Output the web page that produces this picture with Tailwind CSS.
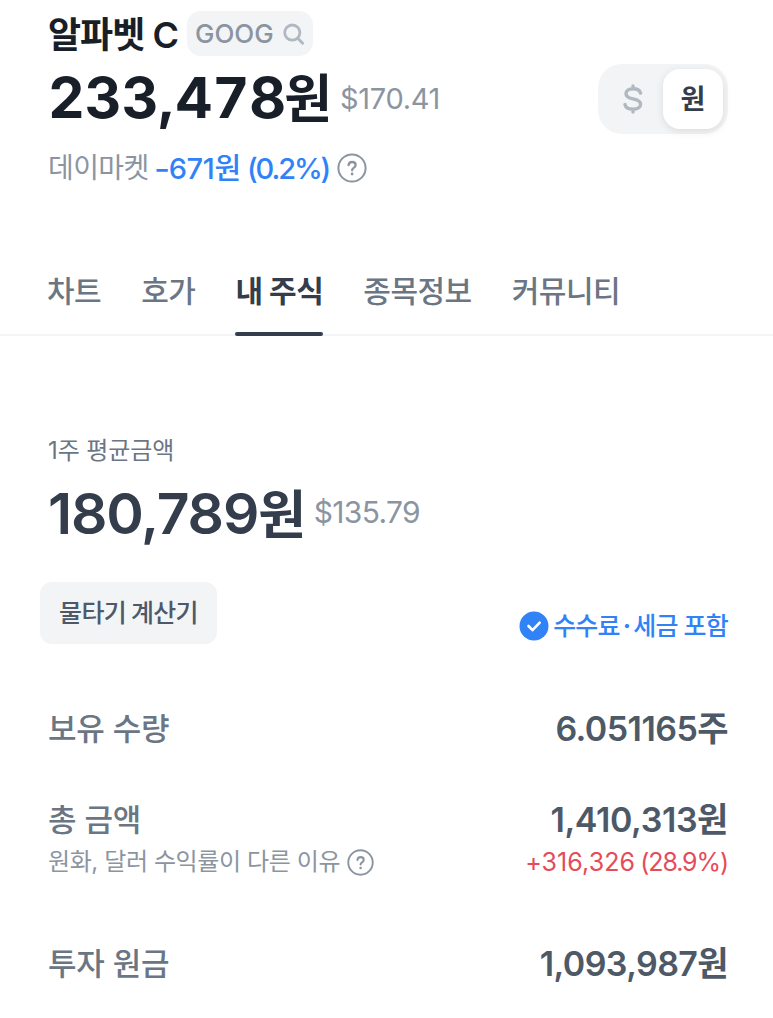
<!DOCTYPE html>
<html lang="ko">
<head>
    <meta charset="UTF-8">
    <meta name="viewport" content="width=device-width, initial-scale=1.0">
    <title>알파벳 C</title>
    <script src="https://cdn.jsdelivr.net/npm/@tailwindcss/browser@4"></script>
</head>
<body class="bg-white font-['Inter','Noto_Sans_CJK_KR',sans-serif] leading-none whitespace-nowrap text-[#4e5968] overflow-hidden">
    <!-- 종목 헤더 -->
    <header class="flex justify-between pt-[11px] pl-12 pr-[45px]">
        <div>
            <div class="flex items-center h-[45px]">
                <h1 class="w-[131px] pt-[3px] text-[36px] font-semibold text-[#191f28] tracking-[-1px]">알파벳 C</h1>
                <button class="flex items-center justify-between ml-2 w-[126px] h-[45px] pl-2 pr-[9px] rounded-[14px] bg-[#f2f4f6] text-[#8b95a1]">
                    <span class="text-[26px] font-medium">GOOG</span>
                    <svg class="w-[21px] h-[22px]" viewBox="0 0 21 22" fill="none" stroke="#b0b8c1" stroke-width="2.8" stroke-linecap="round"><circle cx="9.3" cy="9.6" r="7.6"/><path d="M15 15.5l4.6 4.8"/></svg>
                </button>
            </div>
            <div class="flex items-center h-[84px]">
                <span class="-mt-0.5 text-[57px] font-bold text-[#191f28] tabular-nums">233<span class="inline-block w-[17px]">,</span>478<span class="-ml-0.5 text-[52px]">원</span></span>
                <span class="ml-2 text-[29px] text-[#8b95a1] tracking-[-0.3px]">$170.41</span>
            </div>
            <div class="flex items-center h-14">
                <span class="text-[28px] text-[#8b95a1] tracking-[-0.6px]">데이마켓</span>
                <span class="ml-[5px] text-[29px] font-medium text-[#3182f6] tracking-[-0.3px]"><span class="inline-block w-[15px] origin-left scale-x-120">-</span>671원</span>
                <span class="ml-1.5 text-[29px] font-medium text-[#3182f6] tracking-[-2.1px]">(0.2%)</span>
                <svg class="ml-2 size-[30px]" viewBox="0 0 30 30" fill="none" stroke="#8b95a1" stroke-width="2" stroke-linecap="round"><circle cx="15" cy="15" r="13.6"/><path d="M11.6 12.2c.2-2.1 1.6-3.2 3.5-3.2 2 0 3.5 1.2 3.5 3 0 1.4-.8 2.2-1.9 2.9-1.2.8-1.6 1.3-1.6 2.4" stroke-width="2.3"/><path d="M15.1 21v.1" stroke-width="2.8"/></svg>
            </div>
        </div>
        <div class="flex items-center mt-[53px] w-[130px] h-[70px] rounded-[24px] bg-[#f2f4f6] p-[5px]">
            <button class="flex justify-center w-[60px]">
                <svg class="w-[20px] h-[30px]" viewBox="0 0 20 30" fill="none" stroke="#b0b8c1" stroke-width="3.4" stroke-linecap="round" stroke-linejoin="round"><path d="M17.5 9C16.7 6.3 14 4.8 10 4.8c-4.3 0-7 1.900-7 4.900 0 3.200 2.600 4.300 7 5.200 4.500.9 7.600 2 7.600 5.300 0 3.100-3 5-7.600 5-4.400 0-7.300-1.700-8-4.600M10 2v2.500M10 25.500V28"/></svg>
            </button>
            <button class="w-[60px] h-[60px] rounded-[17px] bg-white shadow-[0_2px_8px_rgba(0,0,0,0.1)] text-[27px] font-bold text-[#333d4b]">원</button>
        </div>
    </header>

    <!-- 탭 -->
    <nav class="flex gap-10 mt-[51px] px-[47px] h-[89px] border-b-2 border-[#f2f4f6] text-[30px] font-medium text-[#6b7684] tracking-[-0.5px]">
        <a class="pt-[29px]">차트</a>
        <a class="pt-[29px]">호가</a>
        <a class="relative pt-[29px] font-bold text-[#333d4b]">내 주식<span class="absolute left-0 right-0 -bottom-0.5 h-1 rounded-full bg-[#333d4b]"></span></a>
        <a class="pt-[29px]">종목정보</a>
        <a class="pt-[29px]">커뮤니티</a>
    </nav>

    <!-- 내 주식 -->
    <main class="pl-12 pr-[45px]">
        <p class="flex items-center mt-[95px] h-10 text-[24px] text-[#6b7684] tracking-[-0.1px]">1주 평균금액</p>
        <div class="flex items-center h-[84px]">
            <span class="text-[57px] font-semibold text-[#333d4b] tracking-[-1.2px]">180,789<span class="text-[52px]">원</span></span>
            <span class="ml-[9px] -mt-0.5 text-[30px] text-[#8b95a1] tracking-[-0.7px]">$135.79</span>
        </div>
        <div class="flex justify-between mt-[27px]">
            <button class="-ml-2 w-[177px] h-[62px] rounded-xl bg-[#f2f4f6] text-[25px] font-medium tracking-[-0.7px] [word-spacing:-1px]">물타기 계산기</button>
            <div class="flex items-center mt-[24px] h-10 text-[25px] font-medium text-[#3182f6] tracking-[-0.8px]">
                <svg class="mr-1 size-[30px]" viewBox="0 0 30 30" fill="none"><circle cx="15" cy="15" r="14.5" fill="#3182f6"/><path d="M9.5 15l4 4.200 7.200-7.600" stroke="#fff" stroke-width="2.6" stroke-linecap="round" stroke-linejoin="round"/></svg>
                <span>수수료<span class="px-[3px] font-bold">·</span>세금 포함</span>
            </div>
        </div>
        <div class="flex items-center justify-between mt-[58px] h-12">
            <span class="text-[31px] font-medium text-[#6b7684] tracking-[-0.2px]">보유 수량</span>
            <span class="pt-0.5 text-[34px] font-semibold tracking-[-0.55px]">6.051165주</span>
        </div>
        <div class="flex items-center justify-between mt-[43px] h-12">
            <span class="text-[31px] font-medium text-[#6b7684] tracking-[-0.2px]">총 금액</span>
            <span class="pt-0.5 text-[34px] font-semibold tracking-[-0.4px]">1,410,313원</span>
        </div>
        <div class="flex items-center justify-between h-9">
            <span class="flex items-center pt-0.5 text-[24px] text-[#8b95a1] tracking-[-0.4px]">원화, 달러 수익률이 다른 이유
                <svg class="ml-[7px] size-[27px]" viewBox="0 0 30 30" fill="none" stroke="#8b95a1" stroke-width="2.1" stroke-linecap="round"><circle cx="15" cy="15" r="13.6"/><path d="M11.6 12.2c.2-2.1 1.6-3.2 3.5-3.2 2 0 3.5 1.2 3.5 3 0 1.4-.8 2.2-1.9 2.9-1.2.8-1.6 1.3-1.6 2.4" stroke-width="2.3"/><path d="M15.1 21v.1" stroke-width="2.8"/></svg>
            </span>
            <span class="flex gap-[5px] pt-0.5 text-[25px] text-[#e54b5a]"><span class="tracking-[0.1px]">+316,326</span><span class="tracking-[-1.1px]">(28.9%)</span></span>
        </div>
        <div class="flex items-center justify-between mt-[60px] h-12">
            <span class="text-[31px] font-medium text-[#6b7684] tracking-[-0.2px]">투자 원금</span>
            <span class="pt-0.5 text-[34px] font-semibold tracking-[-0.6px]">1,093,987원</span>
        </div>
    </main>
</body>
</html>
